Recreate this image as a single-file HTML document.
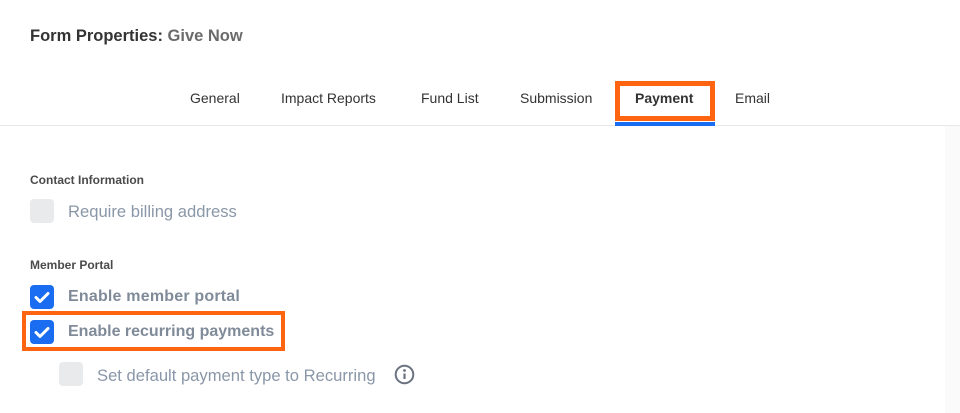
<!DOCTYPE html>
<html><head><style>
*{margin:0;padding:0;box-sizing:border-box}
body{width:960px;height:413px;background:#fff;font-family:"Liberation Sans",sans-serif;position:relative;overflow:hidden}
.a{position:absolute;white-space:nowrap}
.title{left:30px;top:27px;font-size:16.5px;font-weight:bold;color:#333}
.title span{color:#6b6b6b}
.tab{top:90px;font-size:14px;color:#333}
.line{left:0;top:125px;width:960px;height:1px;background:#e8e8e8}
.strip{left:945px;top:126px;width:15px;height:287px;background:#fafafa}
.lbl{font-size:12px;font-weight:bold;color:#4a4a4a}
.cb{width:24px;height:24px;border-radius:4px;background:#e9eaec}
.cb.on{background:#1a6cf0}
.t{font-size:16.6px;color:#8a97a8}
.t.b{font-size:16px;font-weight:bold;color:#808b9a}
</style></head><body>
<div class="a title">Form Properties: <span>Give Now</span></div>
<div class="a tab" style="left:190px">General</div>
<div class="a tab" style="left:281px">Impact Reports</div>
<div class="a tab" style="left:421px">Fund List</div>
<div class="a tab" style="left:520px">Submission</div>
<div class="a tab" style="left:635px;font-weight:bold">Payment</div>
<div class="a tab" style="left:735px">Email</div>
<div class="a" style="left:615px;top:81px;width:100px;height:40px;border:5px solid #ff6410"></div>
<div class="a line"></div>
<div class="a" style="left:615px;top:122px;width:100px;height:4px;background:#1a6cf0"></div>
<div class="a strip"></div>

<div class="a lbl" style="left:30px;top:173px">Contact Information</div>
<div class="a cb" style="left:30px;top:199px"></div>
<div class="a t" style="left:68px;top:202px">Require billing address</div>

<div class="a lbl" style="left:30px;top:258px">Member Portal</div>
<div class="a cb on" style="left:30px;top:285px"><svg width="24" height="24" viewBox="0 0 24 24"><path d="M6 12.5l4 4 8-8" fill="none" stroke="#fff" stroke-width="3" stroke-linecap="round" stroke-linejoin="round"/></svg></div>
<div class="a t b" style="left:68px;top:288px;letter-spacing:0.2px">Enable member portal</div>
<div class="a" style="left:22px;top:311px;width:263px;height:40px;border:4px solid #ff6410"></div>
<div class="a cb on" style="left:30px;top:320px"><svg width="24" height="24" viewBox="0 0 24 24"><path d="M6 12.5l4 4 8-8" fill="none" stroke="#fff" stroke-width="3" stroke-linecap="round" stroke-linejoin="round"/></svg></div>
<div class="a t b" style="left:68px;top:323px">Enable recurring payments</div>
<div class="a cb" style="left:59px;top:362px"></div>
<div class="a t" style="left:97px;top:366px">Set default payment type to Recurring</div>
<svg class="a" style="left:394px;top:364px" width="21" height="21" viewBox="0 0 21 21"><circle cx="10.5" cy="10.5" r="8.8" fill="none" stroke="#6b7380" stroke-width="2"/><circle cx="10.5" cy="6.5" r="1.4" fill="#6b7380"/><path d="M10.5 9.5v5.5" stroke="#6b7380" stroke-width="2.2"/></svg>
</body></html>
